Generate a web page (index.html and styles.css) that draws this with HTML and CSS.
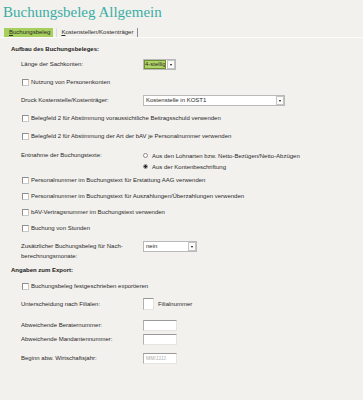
FILE: index.html
```html
<!DOCTYPE html>
<html lang="de">
<head>
  <meta charset="UTF-8" />
  <title>Buchungsbeleg Allgemein</title>
  <link rel="stylesheet" href="styles.css">
</head>
<body>
  <h1 class="title">Buchungsbeleg Allgemein</h1>
  <div class="tabs">
    <span class="tab active"><u>B</u>uchungsbeleg</span>
    <span class="tab"><u>K</u>ostenstellen/Kostenträger</span>
  </div>
  <div class="form">
    <h2 class="section">Aufbau des Buchungsbeleges:</h2>
    <div class="row">
      <span class="label">Länge der Sachkonten:</span>
      <div class="dropdown green"><span class="value">4-stellig</span><span class="arrow"></span></div>
    </div>
    <div class="row">
      <label class="check"><input type="checkbox" class="cb"> Nutzung von Personenkonten</label>
    </div>
    <div class="row">
      <span class="label">Druck Kostenstelle/Kostenträger:</span>
      <div class="dropdown wide"><span class="value">Kostenstelle in KOST1</span><span class="arrow"></span></div>
    </div>
    <div class="row">
      <label class="check"><input type="checkbox" class="cb"> Belegfeld 2 für Abstimmung voraussichtliche Beitragsschuld verwenden</label>
    </div>
    <div class="row">
      <label class="check"><input type="checkbox" class="cb"> Belegfeld 2 für Abstimmung der Art der bAV je Personalnummer verwenden</label>
    </div>
    <div class="row tall">
      <span class="label">Entnahme der Buchungstexte:</span>
      <div class="radios">
        <label class="radio"><input type="radio" name="texte" class="rb"> Aus den Lohnarten bzw. Netto-Bezügen/Netto-Abzügen</label>
        <label class="radio"><input type="radio" name="texte" class="rb" checked> Aus der Kontenbeschriftung</label>
      </div>
    </div>
    <div class="row short">
      <label class="check"><input type="checkbox" class="cb"> Personalnummer im Buchungstext für Erstattung AAG verwenden</label>
    </div>
    <div class="row short">
      <label class="check"><input type="checkbox" class="cb"> Personalnummer im Buchungstext für Auszahlungen/Überzahlungen verwenden</label>
    </div>
    <div class="row short">
      <label class="check"><input type="checkbox" class="cb"> bAV-Vertragsnummer im Buchungstext verwenden</label>
    </div>
    <div class="row short">
      <label class="check"><input type="checkbox" class="cb"> Buchung von Stunden</label>
    </div>
    <div class="row double">
      <span class="label">Zusätzlicher Buchungsbeleg für Nach-<br>berechnungsmonate:</span>
      <div class="dropdown mid"><span class="value">nein</span><span class="arrow"></span></div>
    </div>

    <h2 class="section export">Angaben zum Export:</h2>
    <div class="row small">
      <label class="check"><input type="checkbox" class="cb"> Buchungsbeleg festgeschrieben exportieren</label>
    </div>
    <div class="row small filialen">
      <span class="label">Unterscheidung nach Filialen:</span>
      <span class="field tiny"></span>
      <span class="hint">Filialnummer</span>
    </div>
    <div class="row small berater">
      <span class="label">Abweichende Beraternummer:</span>
      <span class="field"></span>
    </div>
    <div class="row small">
      <span class="label">Abweichende Mandantennummer:</span>
      <span class="field"></span>
    </div>
    <div class="row small beginn">
      <span class="label">Beginn abw. Wirtschaftsjahr:</span>
      <span class="field"><span class="placeholder">MM/JJJJ</span></span>
    </div>
  </div>
</body>
</html>
```

FILE: styles.css
```css
body {
  margin: 0;
  background-color: #f2f1ed;
  color: #2a2a2a;
  font-family: "Liberation Sans", Arial, sans-serif;
  font-size: 6px;
}
.title {
  margin: 5px 0 0 3px;
  font: normal 15px/15px "Liberation Serif", serif;
  color: #3aaea5;
}
/* tab strip */
.tabs {
  display: flex;
  margin-top: 8px;
  padding-left: 4px;
  height: 9px;
  border-bottom: 1px solid #fcfcfa;
}
.tab {
  line-height: 9px;
  padding: 0 4px;
}
.tab.active {
  background-color: #a6cf5d;
  padding: 0 3px 0 5px;
}
.tab + .tab {
  margin-left: 3px;
  border-left: 1px solid #dcdbd6;
  border-right: 1px solid #8c8c8c;
}
.form {
  padding-left: 11px;
}
.section {
  margin: 5px 0 0;
  height: 12px;
  line-height: 12px;
  font-size: 6px;
  font-weight: bold;
  color: #1a1a1a;
}
.section.export {
  margin: 0;
  height: 17px;
  line-height: 17px;
}
.row {
  display: flex;
  align-items: center;
  height: 18px;
  padding-left: 10px;
}
.row.short {
  height: 16px;
}
.row.small {
  height: 14px;
}
.row.filialen {
  margin-top: 4px;
}
.row.berater {
  margin-top: 7px;
}
.row.beginn {
  margin-top: 5px;
}
.row.tall {
  height: 27px;
  align-items: flex-start;
  padding-top: 5px;
  box-sizing: border-box;
}
.row.tall .label {
  line-height: 11px;
}
.row.double {
  height: 26px;
  align-items: flex-start;
  padding-top: 5px;
  box-sizing: border-box;
}
.row.double .label {
  line-height: 10px;
}
.label {
  width: 122px;
  flex: none;
}
/* checkboxes and radios */
.check, .radio {
  display: flex;
  align-items: center;
}
.cb {
  appearance: none;
  width: 7px;
  height: 7px;
  margin: 0 2px 0 1px;
  background-color: #fff;
  border: 1px solid #8e8e8e;
  border-right-color: #c8c8c8;
  border-bottom-color: #c8c8c8;
}
.radios {
  display: flex;
  flex-direction: column;
}
.radio {
  height: 11px;
}
.rb {
  appearance: none;
  width: 5px;
  height: 5px;
  margin: 0 4px 0 0;
  border: 1px solid #8a8a8a;
  border-radius: 50%;
  background-color: #fff;
}
.rb:checked {
  background: radial-gradient(circle, #222 0, #222 1.2px, #fff 1.6px);
}
/* dropdowns */
.dropdown {
  display: flex;
  height: 11px;
  box-sizing: border-box;
  background-color: #fff;
  border: 1px solid #b9b9b9;
}
.dropdown .value {
  flex: 1;
  line-height: 9px;
  padding-left: 2px;
  white-space: nowrap;
  overflow: hidden;
}
.dropdown .arrow {
  position: relative;
  flex: none;
  width: 6px;
  border: 1px solid #c4c4c4;
  background-color: #fbfbfb;
}
.dropdown .arrow::after {
  content: "";
  position: absolute;
  left: 1.5px;
  top: 3px;
  border-left: 1.5px solid transparent;
  border-right: 1.5px solid transparent;
  border-top: 2px solid #111;
}
.dropdown.green {
  width: 33px;
}
.dropdown.green .value {
  background-color: #b0d567;
  border: 1px solid #6f8f37;
  line-height: 7px;
  padding-left: 0;
  margin-right: 1px;
}
.dropdown.wide {
  width: 142px;
}
.dropdown.mid {
  width: 54px;
}
/* text fields */
.field {
  display: block;
  width: 34px;
  height: 11px;
  box-sizing: border-box;
  background-color: #fff;
  border: 1px solid #e4e4e2;
  border-top-color: #9a9a9a;
  border-left-color: #b0b0b0;
}
.field.tiny {
  width: 11px;
  height: 12px;
}
.hint {
  margin-left: 4px;
}
.placeholder {
  display: block;
  padding-left: 2px;
  line-height: 9px;
  font-size: 5px;
  color: #aaa;
}
```
